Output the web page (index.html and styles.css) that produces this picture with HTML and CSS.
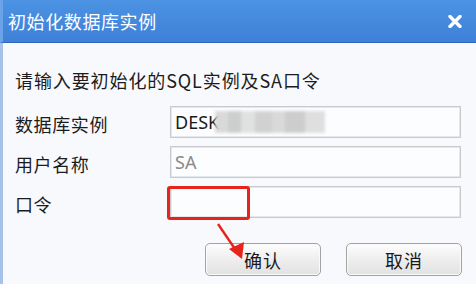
FILE: index.html
```html
<!DOCTYPE html>
<html lang="zh-CN">
<head>
<meta charset="utf-8">
<title>初始化数据库实例</title>
<link rel="stylesheet" href="styles.css">
</head>
<body>
<div class="window">
  <div class="titlebar">
    <span class="title">初始化数据库实例</span>
    <svg class="close" width="14" height="13" viewBox="0 0 14 13"><path d="M2 1.5 L12 11.5 M12 1.5 L2 11.5" stroke="#fff" stroke-width="3.4" stroke-linecap="round"/></svg>
  </div>
  <div class="content">
    <p class="prompt">请输入要初始化的SQL实例及SA口令</p>
    <div class="form">
      <label class="label">数据库实例</label>
      <div class="input dark">DESK<span class="mosaic"></span></div>
      <label class="label">用户名称</label>
      <div class="input gray">SA</div>
      <label class="label">口令</label>
      <div class="input pw">
        <span class="mark"></span>
      </div>
    </div>
    <div class="buttons">
      <button class="btn">确认</button>
      <button class="btn">取消</button>
    </div>
    <svg class="arrow" width="40" height="44" viewBox="0 0 40 44">
      <path d="M1 3 L18 28" stroke="#e8231c" stroke-width="2.4" fill="none"/>
      <path d="M12 28 L27 21 L25 38 Z" fill="#e8231c"/>
    </svg>
  </div>
</div>
</body>
</html>
```

FILE: styles.css
```css
html, body {
  margin: 0;
  padding: 0;
}
body {
  width: 476px;
  height: 284px;
  overflow: hidden;
  font-family: "Noto Sans CJK SC", "Microsoft YaHei", sans-serif;
  background: #f8f9fd;
}
.window {
  height: 284px;
  display: flex;
  flex-direction: column;
}
.titlebar {
  height: 42px;
  border-bottom: 1px solid #2f67b9;
  background: linear-gradient(#4c93e3, #3e80d8);
  border-left: 3px solid #6aa3e8;
  display: flex;
  align-items: center;
  justify-content: space-between;
  padding: 0 14px 0 5px;
  box-sizing: content-box;
}
.title {
  color: #fff;
  font-size: 18px;
  line-height: 24px;
  letter-spacing: 0.6px;
}
.close {
  display: block;
  margin-top: 1px;
}
.content {
  flex: 1;
  position: relative;
  border-left: 3px solid #a6c2ea;
  padding: 0 14px 0 12px;
}
.prompt {
  margin: 25px 0 0;
  font-size: 18px;
  line-height: 24px;
  color: #1c1c1c;
  letter-spacing: 0.9px;
}
.form {
  margin-top: 14px;
  display: grid;
  grid-template-columns: 155px 291px;
  row-gap: 8px;
  align-items: center;
}
.label {
  font-size: 18px;
  line-height: 24px;
  color: #1c1c1c;
  letter-spacing: 0.6px;
  padding-top: 3px;
}
.input {
  height: 32px;
  box-sizing: border-box;
  border: 1px solid #c9c9ce;
  box-shadow: inset 0 0 0 1px #e6e7eb;
  background: #fcfdff;
  font-family: "Noto Sans", "DejaVu Sans", sans-serif;
  font-size: 18px;
  line-height: 29px;
  padding-left: 4px;
  display: flex;
  align-items: center;
}
.input.dark { color: #1a1a1a; }
.input.gray { color: #8a8a8a; }
.mosaic {
  display: inline-block;
  width: 110px;
  height: 22px;
  margin-left: -4px;
  background:
    linear-gradient(90deg, #d6d6d6 0 12%, #c9c9c9 12% 24%, #dedede 24% 36%, #cdcdcd 36% 52%, #d6d6d6 52% 64%, #c8c8c8 64% 82%, #dcdcdc 82% 100%);
  filter: blur(1.5px);
  opacity: 0.9;
}
.input.pw {
  position: relative;
}
.mark {
  position: absolute;
  left: -4px;
  top: -1px;
  width: 83px;
  height: 34px;
  box-sizing: border-box;
  border: 3px solid #e8231c;
  border-radius: 3px;
}
.buttons {
  display: flex;
  justify-content: flex-end;
  gap: 25px;
  margin-top: 25px;
}
.btn {
  width: 116px;
  height: 33px;
  border: 1px solid #a3a3a3;
  border-radius: 5px;
  background: linear-gradient(#fdfdfd, #eeeeee 50%, #e2e2e2);
  box-shadow: inset 0 0 0 1px #fafafa;
  font-family: "Noto Sans CJK SC", sans-serif;
  font-size: 18px;
  line-height: 22px;
  color: #1a1a1a;
  padding: 0;
  letter-spacing: 1px;
}
.arrow {
  position: absolute;
  left: 214px;
  top: 178px;
}
```
